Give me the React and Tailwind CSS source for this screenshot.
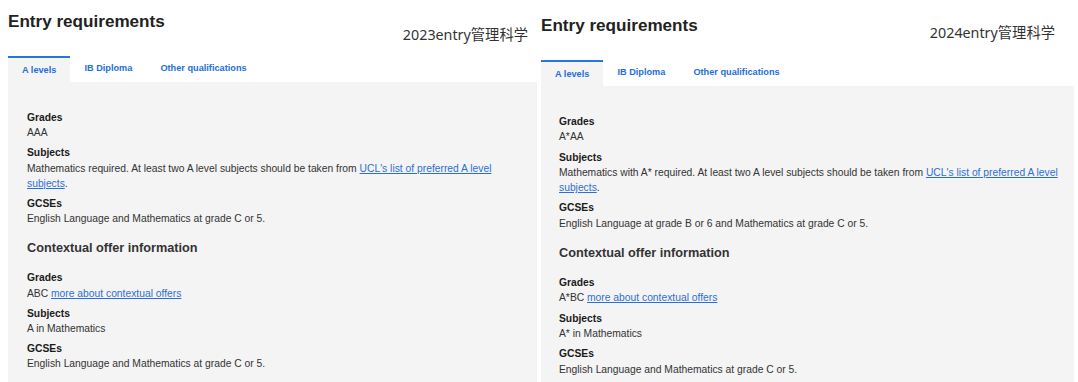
import React from 'react';

const panels = [
  {
    year: '2023entry管理科学',
    outer: 'w-[538px] pl-2 pr-[1px]',
    headerTop: 'pt-[12px]',
    subTop: 'mt-[13px] mr-[9px]',
    headerH: 'h-[56px]',
    box: 'pl-[19px] pr-[18px]',
    lh: 'leading-[15.2px]',
    heading: 'mt-[14px] mb-[13px]',
    main: [
      { label: 'Grades', value: 'AAA' },
      {
        label: 'Subjects',
        value: 'Mathematics required. At least two A level subjects should be taken from ',
        link: "UCL's list of preferred A level subjects",
        after: '.',
      },
      { label: 'GCSEs', value: 'English Language and Mathematics at grade C or 5.' },
    ],
    contextual: [
      { label: 'Grades', value: 'ABC ', link: 'more about contextual offers' },
      { label: 'Subjects', value: 'A in Mathematics' },
      { label: 'GCSEs', value: 'English Language and Mathematics at grade C or 5.' },
    ],
  },
  {
    year: '2024entry管理科学',
    outer: 'w-[540px] pl-[3px] pr-[4px]',
    headerTop: 'pt-[16px]',
    subTop: 'mt-[7px] mr-[19px]',
    headerH: 'h-[60px]',
    box: 'pl-[18px] pr-[10px]',
    lh: 'leading-[15.3px]',
    heading: 'mt-[14px] mb-[13px]',
    main: [
      { label: 'Grades', value: 'A*AA' },
      {
        label: 'Subjects',
        value: 'Mathematics with A* required. At least two A level subjects should be taken from ',
        link: "UCL's list of preferred A level subjects",
        after: '.',
      },
      { label: 'GCSEs', value: 'English Language at grade B or 6 and Mathematics at grade C or 5.' },
    ],
    contextual: [
      { label: 'Grades', value: 'A*BC ', link: 'more about contextual offers' },
      { label: 'Subjects', value: 'A* in Mathematics' },
      { label: 'GCSEs', value: 'English Language and Mathematics at grade C or 5.' },
    ],
  },
];

function Item({ item, lh }) {
  return (
    <div className="mb-[5px]">
      <div className={`font-bold text-[#1a1a1a] text-[10.3px] ${lh}`}>{item.label}</div>
      <div className={`text-[#333] text-[10.3px] ${lh}`}>
        {item.value}
        {item.link && (
          <a href="#" className="text-[#2d6fd6] underline">
            {item.link}
          </a>
        )}
        {item.after}
      </div>
    </div>
  );
}

function Panel({ p }) {
  return (
    <div className={`${p.outer} flex flex-col`}>
      <div className={`${p.headerH} ${p.headerTop} shrink-0 flex justify-between items-start`}>
        <h2 className="text-[17.1px] leading-[20px] font-bold text-[#222]">Entry requirements</h2>
        <div
          className={`${p.subTop} text-[14.3px] leading-[20px] text-[#333]`}
          style={{ fontFamily: '"Noto Sans", "Noto Sans CJK SC", sans-serif' }}
        >
          {p.year}
        </div>
      </div>
      <div className="flex shrink-0 h-[26px] text-[9.2px] font-bold text-[#1f6fd8]">
        <div className="px-[14px] border-t-2 border-[#2a74de] bg-[#f4f4f4] flex items-center pt-[2px]">A levels</div>
        <div className="px-[14px] flex items-center">IB Diploma</div>
        <div className="px-[14px] flex items-center">Other qualifications</div>
      </div>
      <div className={`flex-1 bg-[#f4f4f4] pt-[28px] ${p.box}`}>
        {p.main.map((it) => (
          <Item key={it.label} item={it} lh={p.lh} />
        ))}
        <h3 className={`${p.heading} text-[12.7px] leading-[17px] font-bold text-[#333]`}>
          Contextual offer information
        </h3>
        {p.contextual.map((it) => (
          <Item key={it.label} item={it} lh={p.lh} />
        ))}
      </div>
    </div>
  );
}

export default function App() {
  return (
    <div
      className="w-[1078px] h-[382px] bg-white flex overflow-hidden"
      style={{ fontFamily: '"Liberation Sans", Arial, sans-serif' }}
    >
      {panels.map((p) => (
        <Panel key={p.year} p={p} />
      ))}
    </div>
  );
}
